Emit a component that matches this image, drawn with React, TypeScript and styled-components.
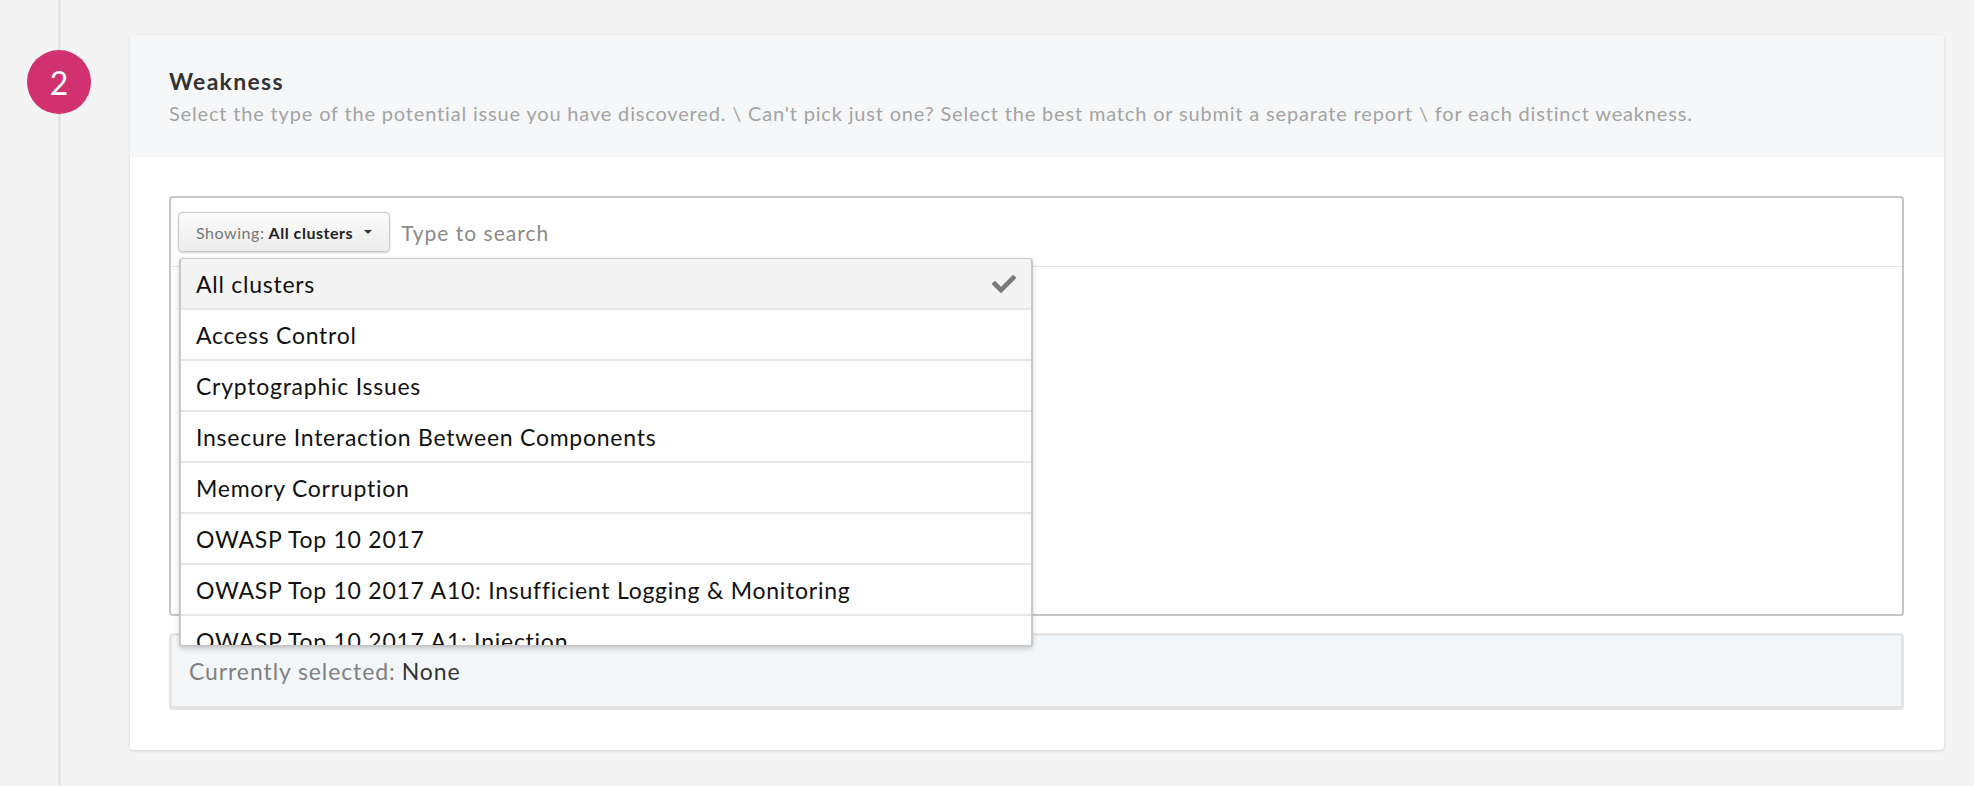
import React from 'react';
import styled, { createGlobalStyle } from 'styled-components';
import { FaCheck } from 'react-icons/fa';

/* Style Section */

const GlobalStyle = createGlobalStyle`
  html, body {
    margin: 0;
    padding: 0;
    background-color: #f4f4f4;
    font-family: 'Lato', 'Liberation Sans', sans-serif;
  }
`;

const Page = styled.div`
  display: flex;
  min-height: 786px;
  background-color: #f4f4f4;
`;

const Rail = styled.div`
  width: 130px;
  flex-shrink: 0;
  background: linear-gradient(#e4e4e4, #e4e4e4) no-repeat 58px 0 / 3px 100%;
`;

const StepBadge = styled.div`
  width: 64px;
  height: 64px;
  margin: 50px 0 0 27px;
  border-radius: 50%;
  background-color: #d1316f;
  color: #ffffff;
  font-size: 32px;
  display: flex;
  align-items: center;
  justify-content: center;
`;

const Card = styled.div`
  margin: 35px 30px 35px 0;
  flex: 1;
  align-self: flex-start;
  background-color: #ffffff;
  border-radius: 4px;
  box-shadow: 0 1px 3px rgba(0, 0, 0, 0.14);
`;

const CardHeader = styled.div`
  background-color: #f6f7f9;
  padding: 34px 39px 32px;
  border-radius: 4px 4px 0 0;
`;

const Title = styled.div`
  font-size: 23px;
  line-height: 25px;
  font-weight: 700;
  letter-spacing: 1.3px;
  color: #333333;
`;

const Description = styled.div`
  font-size: 20px;
  line-height: 23px;
  letter-spacing: 0.83px;
  color: #a3a3a3;
  margin-top: 8px;
  white-space: nowrap;
`;

const CardBody = styled.div`
  padding: 39px 40px 40px 39px;
`;

const PickerBox = styled.div`
  position: relative;
  height: 420px;
  border: 2px solid #c6c6c6;
  border-radius: 4px;
  box-sizing: border-box;
`;

const SearchRow = styled.div`
  height: 69px;
  box-sizing: border-box;
  display: flex;
  align-items: flex-start;
  padding: 14px 0 0 7px;
  gap: 11px;
  border-bottom: 1px solid #e4e4e4;
`;

const FilterButton = styled.div`
  height: 40px;
  box-sizing: border-box;
  display: flex;
  align-items: center;
  padding: 0 17px 0 17px;
  border: 1px solid #c8c8c8;
  border-radius: 4px;
  background: linear-gradient(#fbfbfb, #ececec);
  box-shadow: 0 1px 2px rgba(0, 0, 0, 0.18);
  font-size: 16px;
  letter-spacing: 0.55px;
  color: #777777;
  white-space: nowrap;
`;

const FilterValue = styled.span`
  font-weight: 700;
  color: #222222;
  margin-left: 4px;
`;

const Caret = styled.span`
  width: 0;
  height: 0;
  margin-left: 11px;
  border-left: 4px solid transparent;
  border-right: 4px solid transparent;
  border-top: 4px solid #333333;
`;

const SearchInput = styled.input`
  flex: 1;
  height: 40px;
  border: none;
  outline: none;
  background: transparent;
  font-family: inherit;
  font-size: 21px;
  letter-spacing: 1px;
  color: #333333;
  padding: 0;

  &::placeholder {
    color: #8a8a8a;
  }
`;

const Menu = styled.div`
  position: absolute;
  top: 60px;
  left: 8px;
  width: 854px;
  height: 389px;
  box-sizing: border-box;
  overflow: hidden;
  background-color: #ffffff;
  border: 2px solid #c8c8c8;
  border-top-width: 1px;
  border-radius: 4px;
  box-shadow: 0 2px 5px rgba(0, 0, 0, 0.18);
  z-index: 2;
`;

const MenuItem = styled.div<{ $active?: boolean }>`
  height: 51px;
  box-sizing: border-box;
  display: flex;
  align-items: center;
  justify-content: space-between;
  padding: 0 15px;
  border-bottom: 2px solid #e6e6e6;
  background-color: ${(p) => (p.$active ? '#f4f4f4' : '#ffffff')};
  font-size: 23px;
  letter-spacing: 0.75px;
  color: #111111;
  white-space: nowrap;
`;

const CheckIcon = styled(FaCheck)`
  color: #7a7a7a;
  font-size: 24px;
`;

const SelectedBox = styled.div`
  margin-top: 17px;
  height: 77px;
  box-sizing: border-box;
  display: flex;
  align-items: center;
  padding: 0 17px;
  background-color: #f4f7fa;
  border: 3px solid #e4e4e4;
  border-bottom-width: 4px;
  border-radius: 4px;
  font-size: 23px;
  letter-spacing: 0.9px;
  color: #808080;
`;

const SelectedValue = styled.span`
  color: #333333;
  margin-left: 6px;
`;

const clusters = [
  'All clusters',
  'Access Control',
  'Cryptographic Issues',
  'Insecure Interaction Between Components',
  'Memory Corruption',
  'OWASP Top 10 2017',
  'OWASP Top 10 2017 A10: Insufficient Logging & Monitoring',
  'OWASP Top 10 2017 A1: Injection',
  'OWASP Top 10 2017 A2: Broken Authentication',
];

const App: React.FC = () => {
  const selected = 'All clusters';

  return (
    <>
      <GlobalStyle />
      <Page>
        <Rail>
          <StepBadge>2</StepBadge>
        </Rail>
        <Card>
          <CardHeader>
            <Title>Weakness</Title>
            <Description>
              Select the type of the potential issue you have discovered. \ Can't pick just one? Select the best match
              or submit a separate report \ for each distinct weakness.
            </Description>
          </CardHeader>
          <CardBody>
            <PickerBox>
              <SearchRow>
                <FilterButton>
                  Showing:<FilterValue>All clusters</FilterValue>
                  <Caret />
                </FilterButton>
                <SearchInput placeholder="Type to search" />
              </SearchRow>
              <Menu>
                {clusters.map((name) => (
                  <MenuItem key={name} $active={name === selected}>
                    {name}
                    {name === selected && <CheckIcon />}
                  </MenuItem>
                ))}
              </Menu>
            </PickerBox>
            <SelectedBox>
              Currently selected:<SelectedValue>None</SelectedValue>
            </SelectedBox>
          </CardBody>
        </Card>
      </Page>
    </>
  );
};

export default App;
